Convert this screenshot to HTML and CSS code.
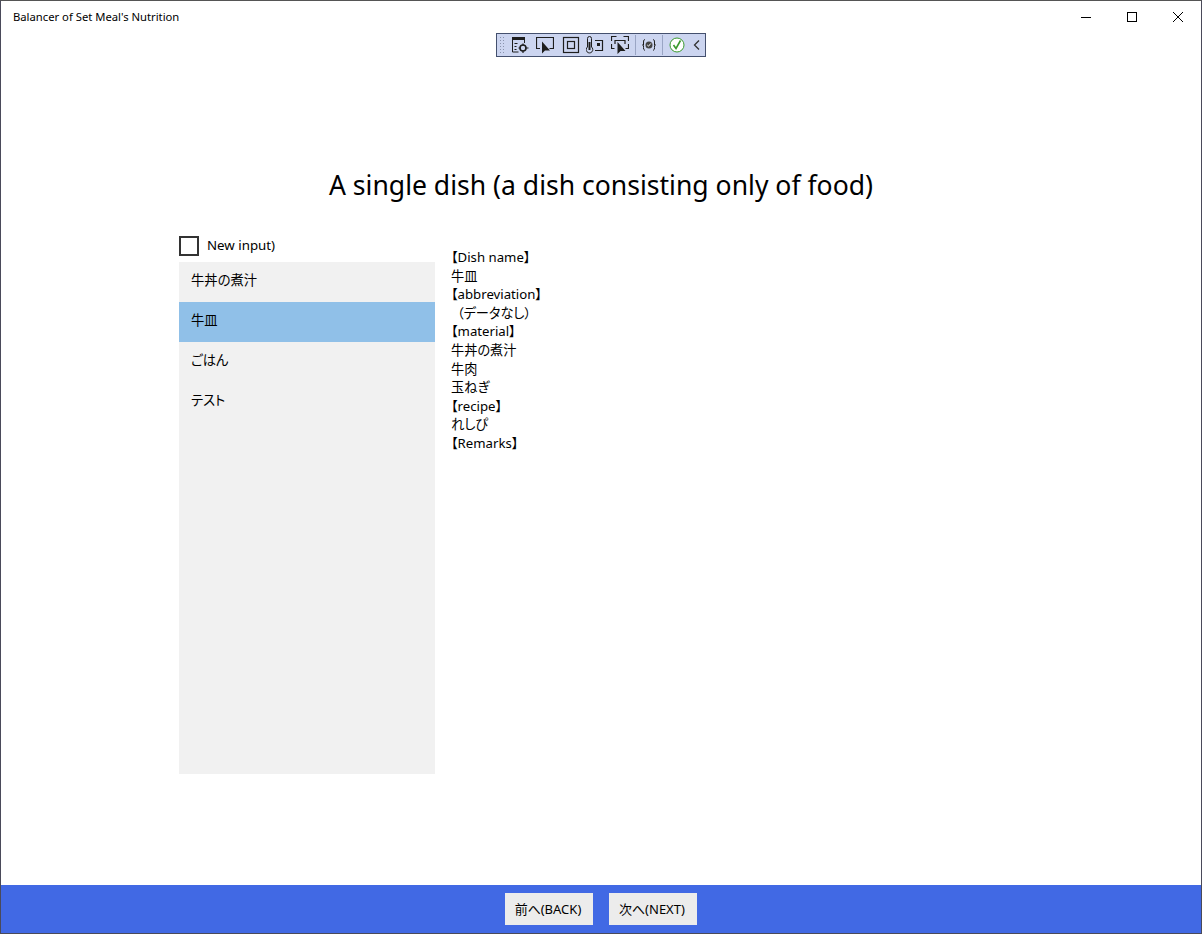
FILE: index.html
```html
<!DOCTYPE html>
<html lang="en">
<head>
    <meta charset="UTF-8">
    <title>Balancer of Set Meal's Nutrition</title>
    <link rel="stylesheet" href="styles.css">
</head>
<body>
<div class="window">

    <!-- Title bar -->
    <div class="titlebar">
        <span class="app-title">Balancer of Set Meal's Nutrition</span>
        <div class="window-buttons">
            <button class="win-btn"><svg width="12" height="12" viewBox="0 0 12 12"><path d="M1 6.500h10" stroke="#000" fill="none"/></svg></button>
            <button class="win-btn"><svg width="12" height="12" viewBox="0 0 12 12"><rect x="1.500" y="1.500" width="9" height="9" stroke="#000" fill="none"/></svg></button>
            <button class="win-btn"><svg width="12" height="12" viewBox="0 0 12 12"><path d="M1 1l10 10M11 1L1 11" stroke="#000" fill="none"/></svg></button>
        </div>
    </div>

    <!-- Debug toolbar -->
    <div class="debug-bar">
        <span class="grip"></span>
        <svg class="tool" width="18" height="18" viewBox="0 0 18 18"><path d="M1.500 2v14h6M13.500 2v5" stroke="#1e1e1e" fill="none"/><path d="M1 1h13v3H1z" fill="#1e1e1e"/><path d="M3.500 7.500h3M3.500 10.500h2M3.500 13.500h2" stroke="#1e1e1e" fill="none"/><circle cx="12" cy="12" r="3" stroke="#1e1e1e" stroke-width="1.600" fill="none"/><path d="M12 7.500v2M12 14.500v2.500M7.500 12h2M14.500 12h3" stroke="#1e1e1e" stroke-width="1.200"/></svg>
        <svg class="tool" width="18" height="18" viewBox="0 0 18 18"><path d="M4 12.500H.5v-11h17v11h-4" stroke="#1e1e1e" stroke-width="1.200" fill="none"/><path d="M6 5.500v12l3-3 5 0z" fill="#1e1e1e"/></svg>
        <svg class="tool box" width="18" height="18" viewBox="0 0 18 18"><rect x="1.500" y="1.500" width="15" height="15" stroke="#1e1e1e" stroke-width="1.200" fill="none"/><rect x="5.500" y="5.500" width="7" height="7" stroke="#1e1e1e" stroke-width="1.200" fill="none"/></svg>
        <svg class="tool" width="18" height="18" viewBox="0 0 18 18"><path d="M1.500 11V2.500a2 2 0 0 1 4 0V11a3.300 3.300 0 1 1-4 0z" stroke="#1e1e1e" fill="none"/><path d="M3.500 6v8" stroke="#1e1e1e" stroke-width="2"/><path d="M9 4.500h7.500v10H9" stroke="#1e1e1e" stroke-width="1.200" fill="none"/><rect x="11" y="7" width="3" height="3" fill="#1e1e1e"/></svg>
        <svg class="tool last" width="18" height="18" viewBox="0 0 18 18"><path d="M.5 5V.5h5M12.500.5h5V5M.5 8v4.500h3M17.500 8v4.500h-3M4 8V4.500h10V8" stroke="#1e1e1e" stroke-width="1.200" fill="none"/><path d="M6.500 6v12l3-3 5 0z" fill="#1e1e1e"/></svg>
        <span class="sep"></span>
        <svg class="tool small" width="14" height="14" viewBox="0 0 14 14"><path d="M3 1.500Q1 1.500 1.500 5T.5 7q1.500.500 1 2.500T3 12.500M11 1.500Q13 1.500 12.500 5T13.500 7q-1.500.500-1 2.500T11 12.500" stroke="#1e1e1e" fill="none"/><circle cx="7" cy="7" r="3.500" fill="#444"/><path d="M5.300 7l1.200 1.200L8.800 5.500" stroke="#fff" fill="none"/></svg>
        <span class="sep"></span>
        <svg class="tool check" width="16" height="16" viewBox="0 0 16 16"><circle cx="8" cy="8" r="7" stroke="#3a9a2e" fill="#fff"/><path d="M4.500 8l2.500 3.500L11.500 3.500" stroke="#3a9a2e" stroke-width="1.600" fill="none"/></svg>
        <svg class="tool chevron" width="8" height="12" viewBox="0 0 8 12"><path d="M6 1.500L1.500 6 6 10.500" stroke="#333" stroke-width="1.300" fill="none"/></svg>
    </div>

    <!-- Page -->
    <div class="content">
        <h1 class="page-title">A single dish (a dish consisting only of food)</h1>

        <div class="columns">
            <div class="left-col">
                <label class="check-row">
                    <span class="checkbox"></span>
                    <span class="check-label">New input)</span>
                </label>
                <ul class="dish-list">
                    <li>牛丼の煮汁</li>
                    <li class="selected">牛皿</li>
                    <li>ごはん</li>
                    <li>テスト</li>
                </ul>
            </div>

            <div class="detail">
                <div>【Dish name】</div>
                <div>牛皿</div>
                <div>【abbreviation】</div>
                <div class="no-data">（データなし）</div>
                <div>【material】</div>
                <div>牛丼の煮汁</div>
                <div>牛肉</div>
                <div>玉ねぎ</div>
                <div>【recipe】</div>
                <div>れしぴ</div>
                <div>【Remarks】</div>
            </div>
        </div>
    </div>

    <!-- Footer -->
    <div class="footer">
        <button class="nav-btn">前へ(BACK)</button>
        <button class="nav-btn">次へ(NEXT)</button>
    </div>
</div>
</body>
</html>
```

FILE: styles.css
```css
/* General Styles */
* {
    box-sizing: border-box;
}

body {
    margin: 0;
    font-family: "Noto Sans", "Noto Sans CJK JP", sans-serif;
    font-feature-settings: "palt";
    color: #000;
}

.window {
    position: relative;
    width: 1202px;
    height: 934px;
    display: flex;
    flex-direction: column;
    background: #fff;
    border: 1px solid #4a4a5a;
    border-top-color: #555;
}

/* Title bar */
.titlebar {
    height: 31px;
    display: flex;
    justify-content: space-between;
    flex-shrink: 0;
}

.app-title {
    margin-left: 12px;
    margin-top: 8px;
    font-size: 11.25px;
    line-height: 16px;
}

.window-buttons {
    display: flex;
}

.win-btn {
    width: 46px;
    height: 31px;
    padding: 0;
    background: none;
    border: none;
    display: flex;
    align-items: center;
    justify-content: center;
}

/* Debug toolbar */
.debug-bar {
    position: absolute;
    left: 495px;
    top: 32px;
    width: 210px;
    height: 24px;
    display: flex;
    align-items: center;
    background: #ccd5f0;
    border: 1px solid #44506e;
}

.grip {
    width: 6px;
    height: 18px;
    margin: 0 6px 0 2px;
    background-image: radial-gradient(#8a93ad 1px, transparent 1px);
    background-size: 3px 3px;
}

.tool {
    margin-right: 7px;
    flex-shrink: 0;
}

.tool.box {
    margin-left: 1px;
    margin-right: 6px;
}

.tool.last {
    margin-right: 6px;
}

.tool.small {
    margin: 0 6px;
}

.tool.check {
    margin: 0 8px 0 6px;
}

.tool.chevron {
    margin: 0;
}

.sep {
    width: 1px;
    height: 20px;
    background: #9aa5c4;
}

/* Page */
.content {
    flex: 1;
    padding-top: 135px;
}

.page-title {
    margin: 0;
    font-size: 26.55px;
    font-weight: normal;
    line-height: 36px;
    text-align: center;
}

.columns {
    display: flex;
    margin-top: 28px;
    padding-left: 178px;
}

.left-col {
    width: 256px;
}

.check-row {
    display: flex;
    align-items: center;
    height: 30px;
    font-size: 13.3px;
}

.check-label {
    padding-bottom: 2px;
}

.checkbox {
    width: 20px;
    height: 20px;
    margin-right: 8px;
    border: 2px solid #333;
}

.dish-list {
    height: 512px;
    margin: 1px 0 0;
    padding: 0;
    list-style: none;
    background: #f1f1f1;
}

.dish-list li {
    height: 40px;
    padding: 0 12px;
    font-size: 13.3px;
    line-height: 36px;
}

.dish-list .selected {
    background: #90c0e8;
}

.detail {
    margin-top: 17px;
    margin-left: 16px;
    font-size: 13.2px;
    line-height: 18.6px;
}

.no-data {
    padding-left: 6px;
}

/* Footer */
.footer {
    height: 48px;
    flex-shrink: 0;
    display: flex;
    justify-content: center;
    align-items: center;
    gap: 16px;
    background: #4169e4;
}

.nav-btn {
    width: 88px;
    height: 32px;
    padding: 0 2px 2px 0;
    background: #ececec;
    border: none;
    font-family: inherit;
    font-size: 13px;
}
```
